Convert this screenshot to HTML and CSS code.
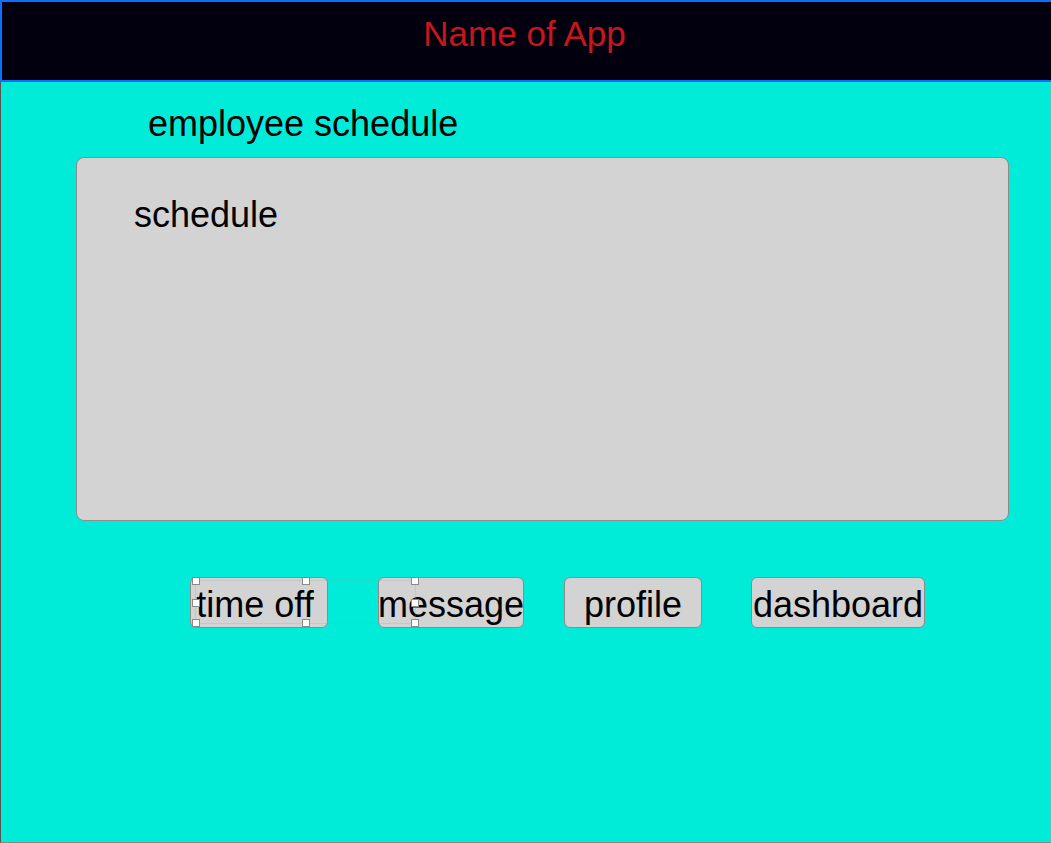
FILE: index.html
```html
<!DOCTYPE html>
<html>
<head>
<meta charset="utf-8">
<title>Name of App</title>
<link rel="stylesheet" href="styles.css">
</head>
<body>
<header class="app-header">
  <h1 class="app-title">Name of App</h1>
</header>
<main class="app-main">
  <h2 class="section-title">employee schedule</h2>
  <section class="schedule-panel">
    <div class="panel-label">schedule</div>
  </section>
  <nav class="button-row">
    <button class="nav-btn btn-timeoff">time off</button>
    <button class="nav-btn btn-message">message</button>
    <button class="nav-btn btn-profile">profile</button>
    <button class="nav-btn btn-dashboard">dashboard</button>
    <div class="selection">
      <span class="handle h-tl"></span>
      <span class="handle h-tm"></span>
      <span class="handle h-tr"></span>
      <span class="handle h-ml"></span>
      <span class="handle h-mr"></span>
      <span class="handle h-bl"></span>
      <span class="handle h-bm"></span>
      <span class="handle h-br"></span>
    </div>
  </nav>
</main>
</body>
</html>
```
FILE: styles.css
```css
* { box-sizing: border-box; }
html, body {
  margin: 0;
  padding: 0;
  width: 1051px;
  height: 843px;
  overflow: hidden;
  background: #00ecd9;
  font-family: "Liberation Sans", Arial, Helvetica, sans-serif;
}
.app-header {
  width: 1060px;
  height: 82px;
  background: #02000f;
  border: 2px solid #0f6dff;
  display: flex;
  justify-content: center;
  padding-right: 11px;
}
.app-title {
  margin: 0;
  font-weight: normal;
  font-size: 35px;
  line-height: 40px;
  padding-top: 12px;
  color: #c8161d;
}
.app-main {
  height: 761px;
  border-left: 1px solid #555;
  border-bottom: 1px solid #888;
  display: flow-root;
}
.section-title {
  margin: 21px 0 0 147px;
  font-weight: normal;
  font-size: 36px;
  line-height: 41px;
  color: #000;
}
.schedule-panel {
  margin: 13px 0 0 75px;
  width: 933px;
  height: 364px;
  background: #d3d3d3;
  border: 1px solid #8c8c8c;
  border-radius: 8px;
  padding: 36px 0 0 57px;
}
.panel-label {
  font-size: 36px;
  line-height: 41px;
  color: #000;
}
.button-row {
  position: relative;
  display: flex;
  margin-top: 56px;
  padding-left: 189px;
}
.nav-btn {
  height: 51px;
  padding: 4px 0 0 0;
  background: #d3d3d3;
  border: 1px solid #8c8c8c;
  border-radius: 6px;
  font-family: "Liberation Sans", Arial, Helvetica, sans-serif;
  font-size: 36px;
  line-height: 45px;
  color: #000;
  text-align: center;
  white-space: nowrap;
  overflow: visible;
  display: flex;
  justify-content: center;
}
.btn-timeoff { width: 138px; padding-right: 8px; }
.btn-message { width: 146px; margin-left: 50px; }
.btn-profile { width: 138px; margin-left: 40px; }
.btn-dashboard { width: 174px; margin-left: 49px; }
.selection {
  position: absolute;
  left: 194px;
  top: 3px;
  width: 221px;
  height: 44px;
  border: 1px solid rgba(140, 160, 160, 0.22);
  pointer-events: none;
}
.handle {
  position: absolute;
  width: 8px;
  height: 8px;
  background: #fff;
  border: 1px solid #8a8a8a;
}
.h-tl { left: -4px; top: -4px; }
.h-tm { left: 106px; top: -4px; }
.h-tr { right: -4px; top: -4px; }
.h-ml { left: -4px; top: 18px; }
.h-mr { right: -4px; top: 18px; }
.h-bl { left: -4px; bottom: -4px; }
.h-bm { left: 106px; bottom: -4px; }
.h-br { right: -4px; bottom: -4px; }
```
